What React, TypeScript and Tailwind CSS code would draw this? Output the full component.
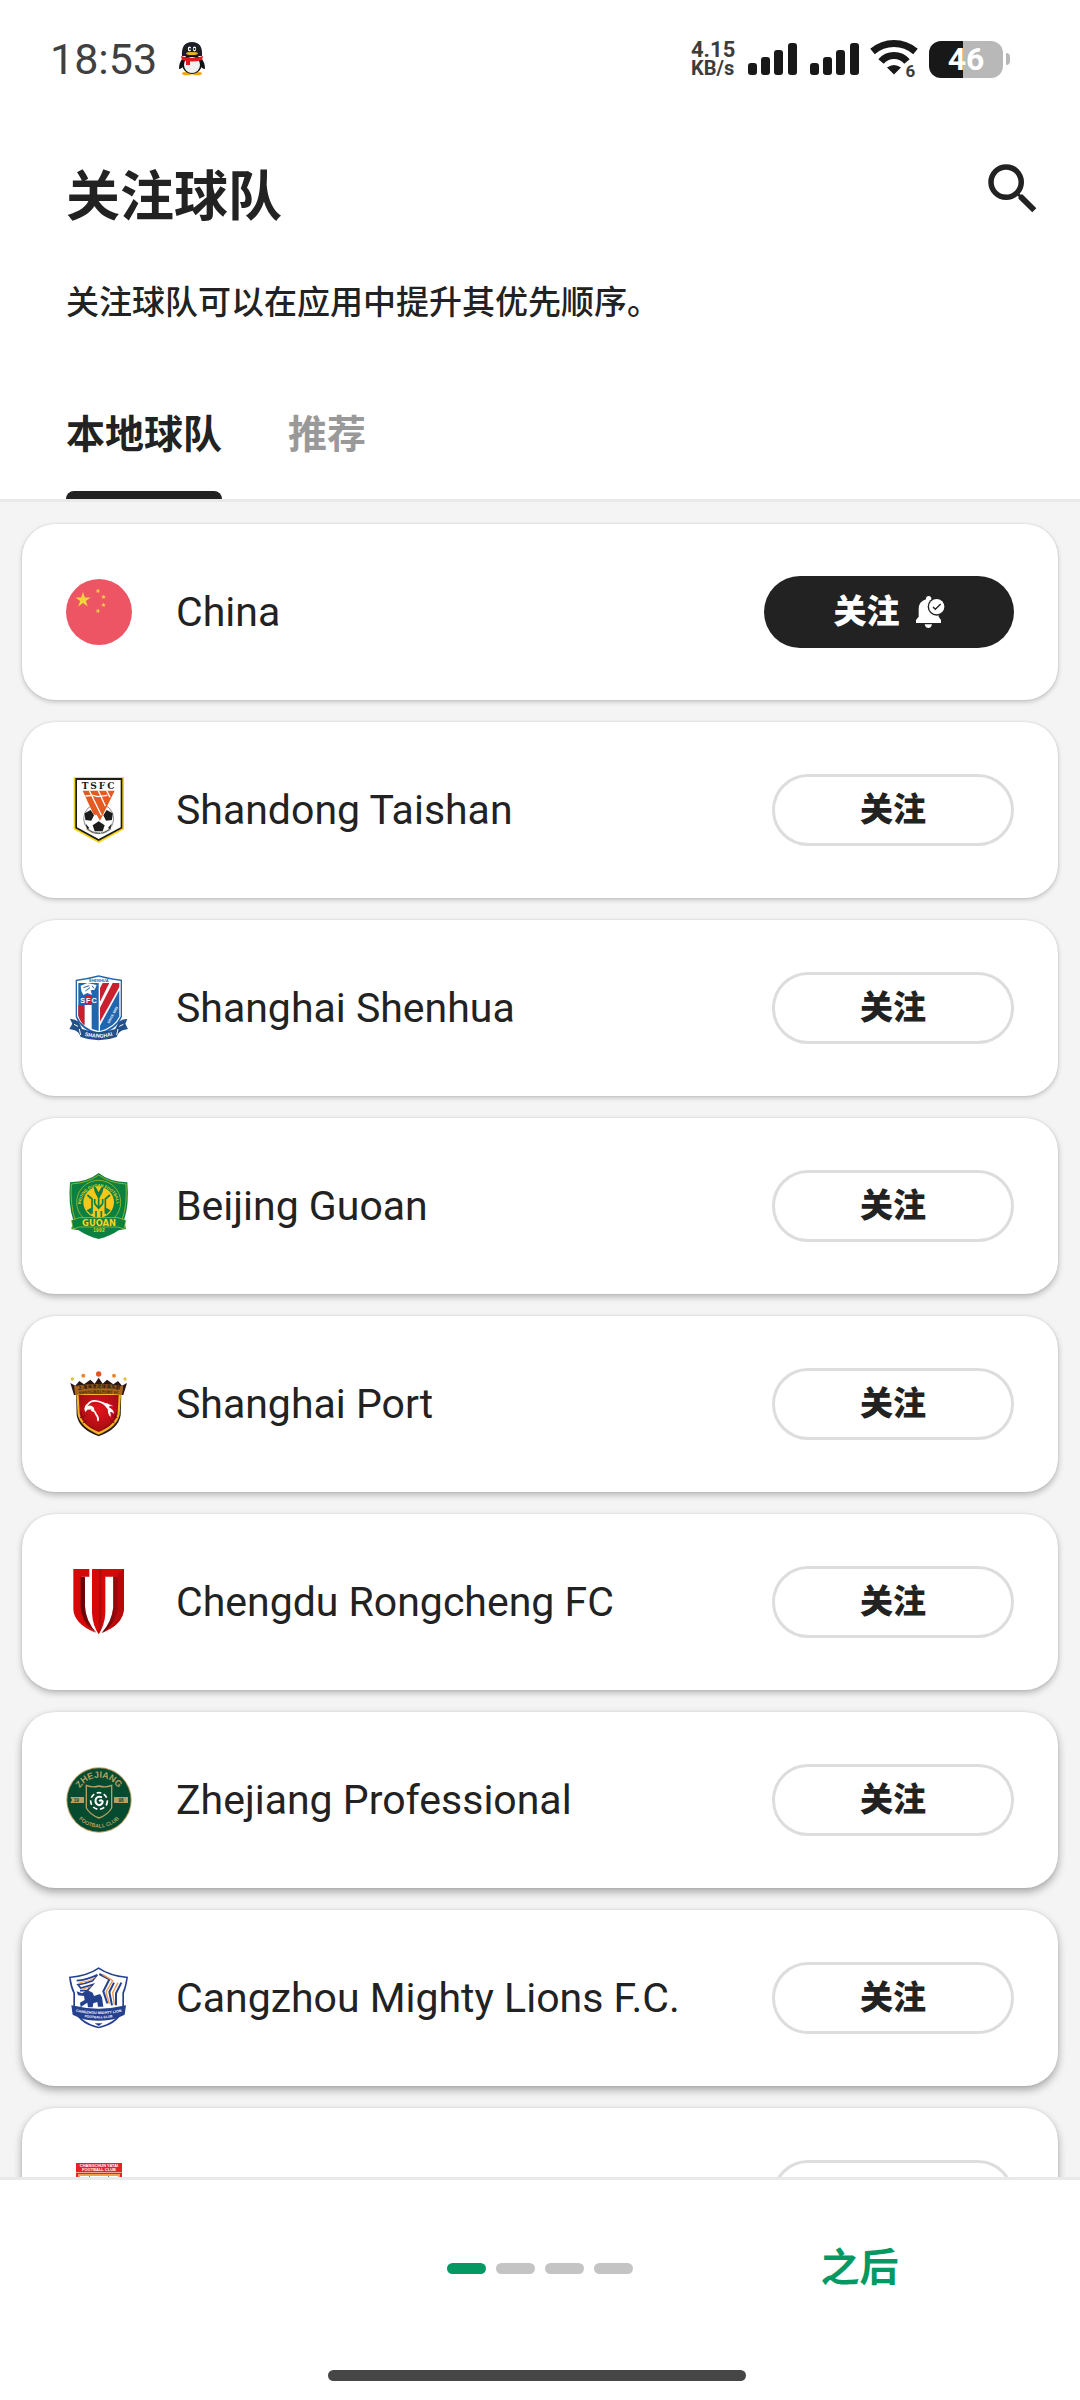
import { useState } from "react";
import type { ReactNode } from "react";
import clsx from "clsx";

// Onboarding step 1: pick the teams to follow.

type Team = {
  id: string;
  name: string;
  crest: ReactNode;
  shadow: string;
};

const SHADOW_LOW = "shadow-[0_2px_5px_rgba(0,0,0,0.2),0_0_2px_rgba(0,0,0,0.12)]";
const SHADOW_MID = "shadow-[0_3px_6px_rgba(0,0,0,0.25),0_0_2px_rgba(0,0,0,0.12)]";
const SHADOW_HIGH = "shadow-[0_4px_8px_rgba(0,0,0,0.32),0_0_2px_rgba(0,0,0,0.1)]";

function Star({ x, y, r, turn = 0 }: { x: number; y: number; r: number; turn?: number }) {
  return (
    <path
      d="M0-1 .225-.31.951-.309.363.118.588.809 0 .382-.588.809-.363.118-.951-.309-.225-.31Z"
      fill="#f0d53f"
      transform={`translate(${x} ${y}) rotate(${turn}) scale(${r})`}
    />
  );
}

function ChinaFlag() {
  return (
    <svg viewBox="0 0 66 66" className="size-full" aria-hidden="true">
      <circle cx="33" cy="33" r="33" fill="#ed5565" />
      <Star x={17} y={21} r={8} />
      <Star x={32} y={12} r={2.6} turn={20} />
      <Star x={37.5} y={18} r={2.6} turn={-10} />
      <Star x={37.5} y={26} r={2.6} />
      <Star x={32} y={32} r={2.6} turn={20} />
    </svg>
  );
}

function ShandongCrest() {
  return (
    <svg viewBox="48 51 198 198" className="size-full overflow-visible" aria-hidden="true">
      <path d="M71 52H222V208L146 249 71 208Z" fill="#f3d21b" />
      <path d="M76 54H217V205L146 243 76 205Z" fill="#1c1c1c" />
      <path d="M81 60H212V202L146 237 81 202Z" fill="#fff" />
      <circle cx="146" cy="176" r="45" fill="#fff" stroke="#555" strokeWidth="2" />
      <path d="M104 160 122 150 132 166 124 182 106 180ZM188 160 170 150 160 166 168 182 186 180ZM128 196 146 184 164 196 158 214H134ZM106 190 118 204 112 208ZM186 190 174 204 180 208Z" fill="#1c1c1c" />
      <path d="M98 92H194L150 182 140 164H131Z" fill="#e35b21" />
      <path d="M118 92 154 166M145 92 166 138M170 92 180 112M106 108 128 106 144 110 172 106" stroke="#fff" strokeWidth="4" fill="none" />
      <text x="147" y="86" textAnchor="middle" fontFamily="DejaVu Serif, serif" fontWeight="700" fontSize="27" letterSpacing="6" fill="#1c1c1c">TSFC</text>
      <path id="sd-arc" d="M92 172A54 50 0 0 0 200 172" fill="none" />
      <text fontFamily="Liberation Sans, sans-serif" fontWeight="700" fontSize="8" fill="#333" textAnchor="middle">
        <textPath href="#sd-arc" startOffset="50%">SHANDONG TAISHAN</textPath>
      </text>
    </svg>
  );
}

function ShenhuaCrest() {
  return (
    <svg viewBox="48 60 198 198" className="size-full overflow-visible" aria-hidden="true">
      <path d="M77 74Q112 70 146 61 180 70 216 74V185Q200 225 146 240 92 225 77 185Z" fill="#2165ae" />
      <path d="M81 78Q114 74 146 65 178 74 212 78V184Q196 220 146 234 96 220 81 184Z" fill="#fff" />
      <path d="M85 84H146V228Q98 216 85 182Z" fill="#2165ae" />
      <path d="M85 150H104V212Q90 200 85 182Z" fill="#c9202e" />
      <path d="M104 150H125V224Q112 218 104 212Z" fill="#fff" />
      <path d="M105 122H125V148H105Z" fill="#c9202e" />
      <path d="M92 92 112 84 140 90 134 104 122 106 126 120 112 114 100 120 94 108Z" fill="#fff" />
      <path d="M100 98 118 92M106 108 120 98M126 92 132 100" stroke="#2165ae" strokeWidth="3" />
      <path d="M150 84H178L150 140Z" fill="#c9202e" />
      <path d="M188 84H208V96L150 200V158Z" fill="#c9202e" />
      <path d="M208 106V184Q194 216 150 228V212Z" fill="#2165ae" />
      <path d="M150 84H158L150 100Z" fill="#fff" />
      <text x="117" y="144" textAnchor="middle" fontFamily="Liberation Sans, sans-serif" fontWeight="700" fontSize="22" letterSpacing="3" fill="#fff">SFC</text>
      <text x="146" y="80" textAnchor="middle" fontFamily="Liberation Sans, sans-serif" fontWeight="700" fontSize="12" fill="#2165ae">SHENHUA</text>
      <text x="178" y="206" fontFamily="Liberation Sans, sans-serif" fontWeight="700" fontSize="10" fill="#fff" transform="rotate(-62 178 206)">SINCE 1993</text>
      <path d="M60 192Q72 190 86 200L96 222Q146 240 196 222L206 200Q220 190 232 192L226 206 234 222 218 226Q206 230 200 246 146 266 92 246 86 230 74 226L58 222 67 206Z" fill="#23508a" />
      <path d="M72 208 84 214M220 208 208 214M88 222 92 240M204 222 200 240" stroke="#fff" strokeWidth="3" />
      <path id="sh-arc" d="M98 240Q146 256 194 240" fill="none" />
      <text fontFamily="Liberation Sans, sans-serif" fontWeight="700" fontSize="16" fill="#fff" textAnchor="middle">
        <textPath href="#sh-arc" startOffset="50%">SHANGHAI</textPath>
      </text>
    </svg>
  );
}

function GuoanCrest() {
  return (
    <svg viewBox="48 54 198 198" className="size-full overflow-visible" aria-hidden="true">
      <path d="M146 54Q178 80 232 82 238 150 222 196L228 222 206 226Q180 244 146 252 112 244 86 226L64 222 70 196Q54 150 60 82 114 80 146 54Z" fill="#0c8040" />
      <path d="M146 60Q178 84 228 87 232 150 216 196M146 60Q114 84 64 87 60 150 76 196" fill="none" stroke="#c5c92e" strokeWidth="2" />
      <circle cx="146" cy="142" r="66" fill="none" stroke="#c5c92e" strokeWidth="2" />
      <circle cx="146" cy="142" r="46" fill="#f8c719" />
      <path d="M130 94 134 110 146 134 158 110 162 94" fill="#0c8040" />
      <path d="M136 94H156L146 112Z" fill="#f8c719" />
      <path d="M112 120 126 132V176M180 120 166 132V176M134 146 146 160 158 146M146 132V160M134 146V132M158 146V132M138 186V168M154 186V168" fill="none" stroke="#0c8040" strokeWidth="5" />
      <path d="M110 166 124 158V180ZM182 166 168 158V180Z" fill="#0c8040" />
      <path id="bj-arc" d="M94 164A54 54 0 1 1 198 164" fill="none" />
      <text fontFamily="Liberation Sans, sans-serif" fontWeight="700" fontSize="12" fill="#e8d12b" textAnchor="middle">
        <textPath href="#bj-arc" startOffset="50%">BEIJING GUOAN FOOTBALL</textPath>
      </text>
      <path d="M64 196 88 188H204L228 196 222 222 204 216H88L70 222Z" fill="#0c8040" stroke="#c5c92e" strokeWidth="2" />
      <text x="147" y="213" textAnchor="middle" fontFamily="DejaVu Sans, sans-serif" fontWeight="700" fontSize="25" fill="#f8d51c">GUOAN</text>
      <text x="147" y="232" textAnchor="middle" fontFamily="Liberation Sans, sans-serif" fontWeight="700" fontSize="14" letterSpacing="1" fill="#f8d51c">1992</text>
    </svg>
  );
}

function PortCrest() {
  return (
    <svg viewBox="48 48 198 198" className="size-full overflow-visible" aria-hidden="true">
      <defs>
        <radialGradient id="port-red" cx="50%" cy="40%" r="65%">
          <stop offset="0" stopColor="#e3141b" />
          <stop offset="1" stopColor="#9d0c12" />
        </radialGradient>
      </defs>
      <path d="M61 84 76 92 88 78 102 88 121 74 134 86 146 68 158 86 171 74 190 88 204 78 216 92 231 84 220 120H72Z" fill="#2a1713" />
      <path d="M78 112H214L212 180Q206 222 146 244 86 222 80 180Z" fill="#2a1713" />
      <path d="M79 116H213L209 178Q202 216 146 239 90 216 83 178Z" fill="#f0b723" />
      <path d="M86 120H206L203 176Q196 210 146 231 96 210 89 176Z" fill="url(#port-red)" />
      <path d="M72 94Q146 80 220 94L216 120Q146 110 76 120Z" fill="#a8651b" />
      <path d="M92 170Q98 206 130 220M200 170Q194 206 162 220M90 188 106 182M98 204 112 196M202 188 186 182M194 204 180 196" stroke="#7d0b10" strokeWidth="3" fill="none" />
      <path d="M106 164Q106 152 114 148 122 136 138 138 156 140 170 152" stroke="#fff" strokeWidth="5" fill="none" strokeLinecap="round" />
      <path d="M104 160Q110 150 124 152 136 158 132 166 122 162 112 164L106 172Z" fill="#fff" />
      <path d="M126 166Q136 168 138 178 146 186 144 196" stroke="#fff" strokeWidth="5" fill="none" strokeLinecap="round" />
      <path d="M152 140Q174 144 190 154 178 152 176 156 192 164 192 176 184 168 180 172 184 178 182 186 172 176 174 164 166 152 152 140Z" fill="#fff" />
      <path id="port-top" d="M74 106Q146 92 220 106" fill="none" />
      <path id="port-sub" d="M78 119Q146 108 216 119" fill="none" />
      <text fontFamily="Noto Sans CJK SC, sans-serif" fontWeight="700" fontSize="14" fill="#2a1713" textAnchor="middle">
        <textPath href="#port-top" startOffset="50%">上海海港足球俱乐部</textPath>
      </text>
      <text fontFamily="Liberation Serif, serif" fontWeight="700" fontSize="12" fill="#2a1713" textAnchor="middle">
        <textPath href="#port-sub" startOffset="50%">SHANGHAI PORT FC</textPath>
      </text>
      <circle cx="146" cy="57" r="8" fill="#e8501f" />
      <circle cx="100" cy="62" r="6" fill="#ef8626" />
      <circle cx="192" cy="62" r="6" fill="#ef8626" />
      <circle cx="67" cy="72" r="5" fill="#e3c23a" />
      <circle cx="225" cy="72" r="5" fill="#e3c23a" />
    </svg>
  );
}

function RongchengCrest() {
  return (
    <svg viewBox="48 57 198 198" className="size-full" aria-hidden="true">
      <defs>
        <linearGradient id="rc-dark" x1="0" x2="1">
          <stop offset="0" stopColor="#5a0508" />
          <stop offset="1" stopColor="#a00a0e" />
        </linearGradient>
      </defs>
      <path d="M70 57H118V80H94V170Q98 216 136 248 72 222 70 178Z" fill="#d80808" />
      <path d="M92 80H105V168Q107 214 140 249 96 222 92 172Z" fill="url(#rc-dark)" />
      <path d="M126 57H222V178Q218 224 158 248 188 214 190 170V80H166V190Q164 226 146 253 128 226 126 190Z" fill="#d80808" />
      <path d="M148 57H154V232L146 253Z" fill="#b00b0b" />
      <path d="M190 80H205V170Q200 222 154 250 186 214 190 170Z" fill="url(#rc-dark)" />
      <path d="M205 70 222 57V178Q218 216 178 238 205 206 205 170Z" fill="#b50a0c" />
    </svg>
  );
}

function ZhejiangCrest() {
  return (
    <svg viewBox="48 651 198 198" className="size-full overflow-visible" aria-hidden="true">
      <circle cx="147" cy="750" r="98" fill="#b79f63" />
      <circle cx="147" cy="750" r="95" fill="#064a2f" />
      <path d="M61 741H234V759H61L66 750Z" fill="#b79f63" />
      <path d="M102 700H192V780Q178 800 147 812 116 800 102 780Z" fill="#064a2f" />
      <path d="M109 706Q128 714 147 708 166 714 185 706V774Q174 794 147 804 120 794 109 774Z" fill="#064a2f" stroke="#b79f63" strokeWidth="4" />
      <circle cx="147" cy="753" r="25" fill="none" stroke="#fff" strokeWidth="5" strokeDasharray="14 8" />
      <path d="M156 742Q142 736 137 748 134 762 148 766 158 764 158 754 152 748 148 754" fill="none" stroke="#fff" strokeWidth="6" />
      <text x="79" y="755" textAnchor="middle" fontFamily="Liberation Sans, sans-serif" fontWeight="700" fontSize="14" fill="#064a2f">19</text>
      <text x="213" y="755" textAnchor="middle" fontFamily="Liberation Sans, sans-serif" fontWeight="700" fontSize="14" fill="#064a2f">98</text>
      <path id="zj-top" d="M80 750A67 67 0 0 1 214 750" fill="none" />
      <text fontFamily="Liberation Sans, sans-serif" fontWeight="700" fontSize="27" fill="#b79f63" textAnchor="middle">
        <textPath href="#zj-top" startOffset="50%">ZHEJIANG</textPath>
      </text>
      <path id="zj-bottom" d="M64 750A83 83 0 0 0 230 750" fill="none" />
      <text fontFamily="Liberation Sans, sans-serif" fontWeight="700" fontSize="16" fill="#b79f63" textAnchor="middle">
        <textPath href="#zj-bottom" startOffset="50%">FOOTBALL CLUB</textPath>
      </text>
    </svg>
  );
}

function CangzhouCrest() {
  return (
    <svg viewBox="48 45 198 198" className="size-full overflow-visible" aria-hidden="true">
      <path d="M146 52Q180 76 234 80 230 110 222 130V170Q212 220 146 235 80 220 70 170V130Q60 110 57 80 112 76 146 52Z" fill="#24408e" />
      <path d="M146 57Q180 80 229 84 225 110 217 129V170Q208 214 146 230 84 214 75 170V129Q66 110 62 84 112 80 146 57Z" fill="#fff" />
      <path d="M80 92Q110 90 142 74L128 92Q104 102 84 104L92 114 128 104 112 122H90" fill="none" stroke="#24408e" strokeWidth="5" />
      <path d="M88 98Q116 96 136 82M96 118 124 110" fill="none" stroke="#e9964a" strokeWidth="3" />
      <path d="M148 72 178 88 160 124 172 160M192 98 178 126 186 166M214 98 198 130V166" fill="none" stroke="#24408e" strokeWidth="6" />
      <path d="M158 74 188 92 168 126 178 162M204 98 188 128 193 164" fill="none" stroke="#e9964a" strokeWidth="4" />
      <path d="M80 124 96 130 112 120 128 128 132 138 150 132 156 142 160 170H144L142 156 130 160 128 172H114L112 158 100 166 92 172 90 158 104 150 102 138 84 136Z" fill="#24408e" />
      <path d="M64 166Q146 186 228 166L224 194Q212 200 202 204 180 212 146 212 112 212 90 204 80 200 68 194Z" fill="#24408e" />
      <path id="cz-1" d="M70 184Q146 200 222 184" fill="none" />
      <path id="cz-2" d="M96 200Q146 210 196 200" fill="none" />
      <text fontFamily="Liberation Sans, sans-serif" fontWeight="700" fontSize="11" fill="#fff" textAnchor="middle">
        <textPath href="#cz-1" startOffset="50%">CANGZHOU MIGHTY LION</textPath>
      </text>
      <text fontFamily="Liberation Sans, sans-serif" fontWeight="700" fontSize="10" fill="#fff" textAnchor="middle">
        <textPath href="#cz-2" startOffset="50%">FOOTBALL CLUB</textPath>
      </text>
      <path d="M134 220H158L146 228Z" fill="#24408e" />
    </svg>
  );
}

function YataiCrest() {
  return (
    <svg viewBox="0 0 66 66" className="size-full" aria-hidden="true">
      <path d="M10 0H56V48Q50 60 33 66 16 60 10 48Z" fill="#e9202a" />
      <path d="M10 9H56V10H10Z" fill="#f6a3a0" />
      <path d="M12 11H54V48Q48 58 33 63 18 58 12 48Z" fill="#f0a04b" />
      <path d="M14 13H52V47Q46 55 33 60 20 55 14 47Z" fill="#fff" />
      <path d="M23 13H24V50H23ZM42 13H43V50H42Z" fill="#4d9b4a" />
      <g fontFamily="Liberation Sans, sans-serif" fontWeight="700" fontSize="4" fill="#fff" textAnchor="middle">
        <text x="33" y="4">CHANGCHUN YATAI</text>
        <text x="33" y="8">FOOTBALL CLUB</text>
      </g>
    </svg>
  );
}

const TEAMS: Team[] = [
  { id: "china", name: "China", crest: <ChinaFlag />, shadow: SHADOW_LOW },
  { id: "shandong", name: "Shandong Taishan", crest: <ShandongCrest />, shadow: SHADOW_LOW },
  { id: "shenhua", name: "Shanghai Shenhua", crest: <ShenhuaCrest />, shadow: SHADOW_LOW },
  { id: "guoan", name: "Beijing Guoan", crest: <GuoanCrest />, shadow: SHADOW_MID },
  { id: "port", name: "Shanghai Port", crest: <PortCrest />, shadow: SHADOW_MID },
  { id: "rongcheng", name: "Chengdu Rongcheng FC", crest: <RongchengCrest />, shadow: SHADOW_MID },
  { id: "zhejiang", name: "Zhejiang Professional", crest: <ZhejiangCrest />, shadow: SHADOW_HIGH },
  { id: "cangzhou", name: "Cangzhou Mighty Lions F.C.", crest: <CangzhouCrest />, shadow: SHADOW_HIGH },
  { id: "yatai", name: "Changchun Yatai", crest: <YataiCrest />, shadow: SHADOW_HIGH },
];

function Penguin() {
  return (
    <svg viewBox="0 0 26 34" className="h-[34px] w-[26px]" aria-hidden="true">
      <ellipse cx="8" cy="31.5" rx="5" ry="1.8" fill="#f2a516" />
      <ellipse cx="18" cy="31.5" rx="5" ry="1.8" fill="#f2a516" />
      <path d="M4 16Q0 20 0 27 3 27 5 23M22 16Q26 20 26 27 23 27 21 23" fill="#111" />
      <ellipse cx="13" cy="22" rx="10" ry="10" fill="#111" />
      <path d="M3 14Q2 0 13 0T23 14Z" fill="#1c1c26" />
      <ellipse cx="13" cy="23" rx="8" ry="8" fill="#f1f1f1" />
      <path d="M2 14Q13 18 24 14L23 18Q13 21 3 18Z" fill="#dc1c1c" />
      <path d="M7 18H11V23H7Z" fill="#dc1c1c" />
      <ellipse cx="10.5" cy="7" rx="1.7" ry="2.4" fill="#fff" />
      <ellipse cx="15.5" cy="7" rx="1.7" ry="2.4" fill="#fff" />
      <circle cx="11" cy="7" r="1" fill="#111" />
      <circle cx="15.5" cy="7" r="1" fill="#111" />
      <ellipse cx="13" cy="11.5" rx="6" ry="1.6" fill="#f2b02a" />
    </svg>
  );
}

function SignalBars() {
  return (
    <svg viewBox="0 0 49 32" className="h-8 w-[49px]" fill="#181818" aria-hidden="true">
      <rect x="0" y="20" width="9" height="12" rx="3" />
      <rect x="13" y="14" width="9" height="18" rx="3" />
      <rect x="26" y="7" width="9" height="25" rx="3" />
      <rect x="40" y="0" width="9" height="32" rx="3" />
    </svg>
  );
}

function Wifi() {
  return (
    <svg viewBox="0 0 48 38" className="h-[38px] w-12 overflow-visible" aria-hidden="true">
      <g fill="none" stroke="#181818" strokeWidth="7">
        <path d="M2.5 11.5Q12 3.5 24 3.5T45.5 11.5" />
        <path d="M11 21.5Q16 15.5 24 15.5T37 21.5" />
      </g>
      <path d="M17 27.5Q24 22.5 31 27.5L24 34.5Z" fill="#181818" />
      <circle cx="40.5" cy="31" r="7" fill="#fff" />
      <text x="40.5" y="37" textAnchor="middle" fontFamily="Roboto, sans-serif" fontWeight="700" fontSize="17" fill="#3c3c3c">6</text>
    </svg>
  );
}

function StatusBar() {
  return (
    <div className="flex h-[118px] shrink-0 items-center justify-between pr-[70px] pl-[50px]">
      <div className="flex items-center gap-[22px]">
        <span className="text-[43px] leading-[48px] text-[#404040]">18:53</span>
        <Penguin />
      </div>
      <div className="flex items-center">
        <div className="flex w-[57px] flex-col font-bold text-[#3c3c3c]">
          <span className="text-[22px] leading-[18px]">4.15</span>
          <span className="text-[20px] leading-[18px]">KB/s</span>
        </div>
        <SignalBars />
        <span className="w-[13px]" />
        <SignalBars />
        <span className="w-[11px]" />
        <Wifi />
        <div className="ml-[11px] flex h-[37px] w-[74px] items-center justify-center rounded-xl bg-linear-to-r from-[#181818] from-46% to-[#b8b8b8] to-46% text-[32px] leading-9 font-bold text-white">
          46
        </div>
        <span className="ml-[3px] h-3 w-1 rounded-r-full bg-[#b8b8b8]" />
      </div>
    </div>
  );
}

function BellCheck() {
  return (
    <svg viewBox="588 288 87 96" className="h-8 w-[29px]" aria-hidden="true">
      <path d="M618 296Q618 288 626 288T634 296V299Q654 306 656 330V350L663 360V369H588V360L596 350V328Q596 304 618 298Z" fill="currentColor" />
      <path d="M614 373H636Q634 384 625 384T614 373Z" fill="currentColor" />
      <circle cx="650" cy="320" r="27" fill="#222" />
      <circle cx="650" cy="320" r="23" fill="currentColor" />
      <path d="M639 321 646 328 662 312" fill="none" stroke="#222" strokeWidth="4" />
    </svg>
  );
}

type TeamRowProps = {
  team: Team;
  followed: boolean;
  onToggle: () => void;
};

function TeamRow({ team, followed, onToggle }: TeamRowProps) {
  return (
    <li className={clsx("flex h-44 shrink-0 items-center rounded-[33px] bg-white px-11", team.shadow)}>
      <span className="size-[66px] shrink-0">{team.crest}</span>
      <span className="ml-11 flex-1 text-[41px] leading-[48px] font-[450]">{team.name}</span>
      <button
        type="button"
        aria-pressed={followed}
        onClick={onToggle}
        className={clsx(
          "flex h-[72px] items-center justify-center gap-4 rounded-full text-[33px] leading-[48px] font-black",
          followed ? "w-[250px] bg-[#222] text-white" : "w-[242px] border-3 border-[#ddd] bg-white text-[#222]",
        )}
      >
        关注
        {followed && <BellCheck />}
      </button>
    </li>
  );
}

const TABS = ["本地球队", "推荐"];
const STEPS = [0, 1, 2, 3];

export default function App() {
  const [tab, setTab] = useState(0);
  const [followed, setFollowed] = useState<string[]>(["china"]);

  const toggle = (id: string) =>
    setFollowed((prev) => (prev.includes(id) ? prev.filter((t) => t !== id) : [...prev, id]));

  return (
    <div className="flex h-screen flex-col bg-white font-['Roboto','Noto_Sans_CJK_SC',sans-serif] text-[#222]">
      <StatusBar />

      <header className="shrink-0 border-b-3 border-[#e9e9e9]">
        <div className="flex items-start justify-between pt-[38px] pr-[34px] pl-[66px]">
          <h1 className="pt-2.5 text-[54px] leading-[64px] font-bold">关注球队</h1>
          <button type="button" aria-label="搜索" className="size-[66px]">
            <svg viewBox="0 0 24 24" fill="currentColor" className="size-full" aria-hidden="true">
              <path d="M15.5 14h-.79l-.28-.27A6.471 6.471 0 0 0 16 9.5 6.5 6.5 0 1 0 9.5 16c1.61 0 3.09-.59 4.23-1.57l.27.28v.79l5 4.99L20.49 19l-4.99-5zm-6 0C7.01 14 5 11.99 5 9.5S7.01 5 9.5 5 14 7.01 14 9.5 11.99 14 9.5 14z" />
            </svg>
          </button>
        </div>
        <p className="px-[66px] pt-[53px] text-[33px] leading-10 font-medium">关注球队可以在应用中提升其优先顺序。</p>
        <div role="tablist" className="flex gap-[66px] px-[66px] pt-[88px]">
          {TABS.map((label, i) => (
            <button
              key={label}
              type="button"
              role="tab"
              aria-selected={tab === i}
              onClick={() => setTab(i)}
              className={clsx(
                "flex flex-col gap-8 text-[39px] leading-[48px] font-bold",
                tab === i ? "text-[#222]" : "text-[#999]",
              )}
            >
              {label}
              <span className={clsx("h-2 w-full rounded-t-lg", tab === i && "bg-[#222]")} />
            </button>
          ))}
        </div>
      </header>

      <main className="min-h-0 flex-1 overflow-y-auto bg-[#f4f4f4] [scrollbar-width:none]">
        <ul className="flex flex-col gap-[22px] p-[22px]">
          {TEAMS.map((team) => (
            <TeamRow
              key={team.id}
              team={team}
              followed={followed.includes(team.id)}
              onToggle={() => toggle(team.id)}
            />
          ))}
        </ul>
      </main>

      <footer className="shrink-0 border-t-3 border-[#e9e9e9]">
        <div className="grid h-44 grid-cols-[1fr_auto_1fr] items-center gap-1.5">
          <div className="col-start-2 flex gap-2.5">
            {STEPS.map((step) => (
              <span
                key={step}
                className={clsx("h-[11px] w-[39px] rounded-full", step === 0 ? "bg-[#059862]" : "bg-[#c4c4c4]")}
              />
            ))}
          </div>
          <button type="button" className="justify-self-center text-[39px] leading-[48px] font-bold text-[#059862]">
            之后
          </button>
        </div>
        {/* Gesture bar */}
        <div className="flex justify-center pt-3.5 pr-1.5 pb-[19px]">
          <span className="h-[11px] w-[418px] rounded-full bg-[#464646]" />
        </div>
      </footer>
    </div>
  );
}
